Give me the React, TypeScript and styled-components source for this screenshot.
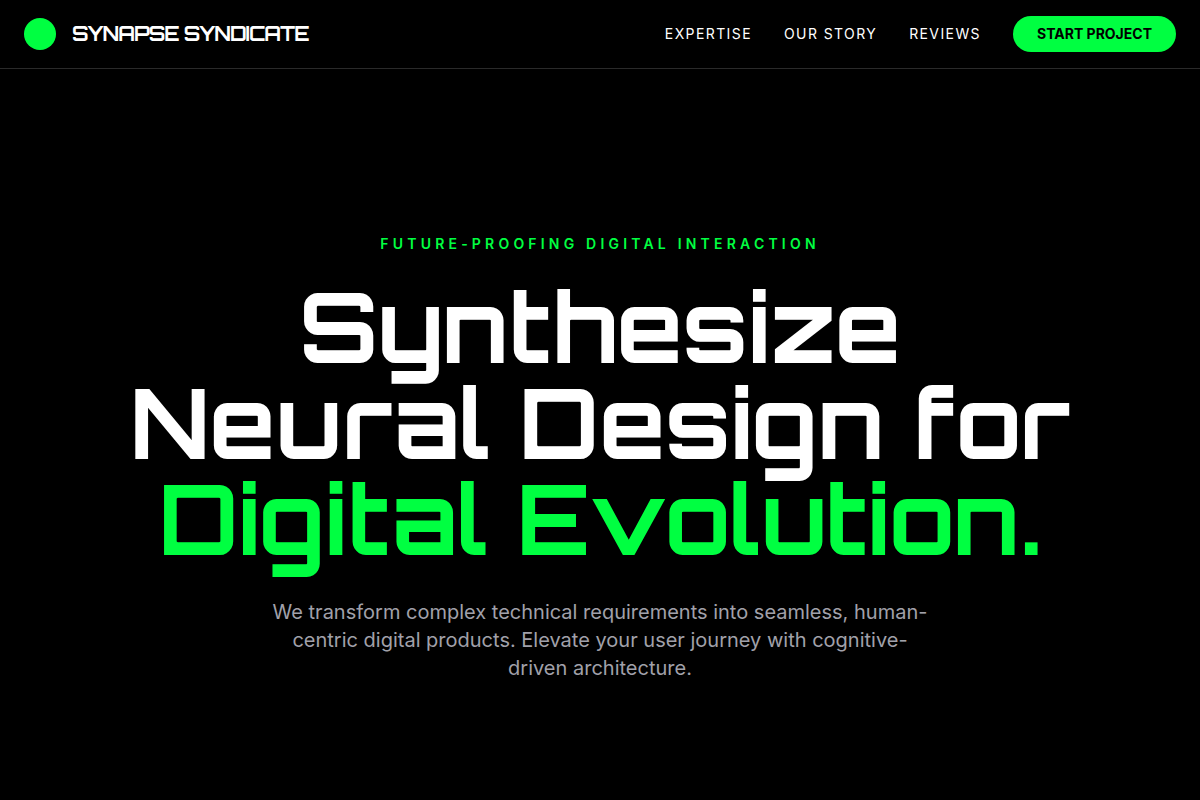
import React from "react";
import styled, { createGlobalStyle, ThemeProvider } from "styled-components";

const theme = {
  accent: "#00ff41",
  background: "#000000",
  text: "#ffffff",
  muted: "#a1a1aa",
  line: "#2a2a2a",
  display: '"Orbitron", "DejaVu Sans", sans-serif',
  body: '"Inter", sans-serif',
};

const GlobalStyle = createGlobalStyle`
  *, *::before, *::after {
    box-sizing: border-box;
  }
  body {
    margin: 0;
    background: ${theme.background};
    color: ${theme.text};
    font-family: ${theme.body};
  }
`;

const Page = styled.div`
  display: flex;
  flex-direction: column;
  min-height: 100vh;
`;

const Header = styled.header`
  display: flex;
  flex-wrap: wrap;
  align-items: center;
  justify-content: space-between;
  gap: 16px;
  padding: 16px 24px;
  border-bottom: 1px solid ${({ theme }) => theme.line};
`;

const Brand = styled.a`
  display: flex;
  align-items: center;
  gap: 16px;
  color: ${({ theme }) => theme.text};
  font-family: ${({ theme }) => theme.display};
  font-size: 20px;
  font-weight: 700;
  line-height: 28px;
  letter-spacing: -0.05em;
  text-decoration: none;
`;

const BrandMark = styled.span`
  width: 32px;
  height: 32px;
  border-radius: 50%;
  background: ${({ theme }) => theme.accent};
`;

const Nav = styled.nav`
  display: flex;
  flex-wrap: wrap;
  align-items: center;
  gap: 32px;
`;

const NavLink = styled.a`
  color: ${({ theme }) => theme.text};
  font-size: 14px;
  line-height: 20px;
  letter-spacing: 0.1em;
  text-decoration: none;
  text-transform: uppercase;

  &:hover {
    color: ${({ theme }) => theme.accent};
  }
`;

const StartButton = styled.button`
  padding: 8px 24px;
  border: 0;
  border-radius: 18px;
  background: ${({ theme }) => theme.accent};
  color: ${({ theme }) => theme.background};
  font-family: inherit;
  font-size: 14px;
  font-weight: 700;
  line-height: 20px;
  cursor: pointer;
`;

const Hero = styled.main`
  display: flex;
  flex-direction: column;
  align-items: center;
  padding: 165px 24px 96px;
  text-align: center;
`;

const Eyebrow = styled.p`
  margin: 0 0 24px;
  color: ${({ theme }) => theme.accent};
  font-size: 14px;
  font-weight: 600;
  line-height: 20px;
  letter-spacing: 0.3em;
  text-transform: uppercase;
`;

const Headline = styled.h1`
  margin: 0 0 32px;
  font-family: ${({ theme }) => theme.display};
  font-size: 96px;
  font-weight: 700;
  line-height: 96px;

  @media (max-width: 1023px) {
    font-size: 48px;
    line-height: 52px;
  }
`;

const HeadlineLine = styled.span<{ $accent?: boolean }>`
  display: block;
  color: ${({ $accent, theme }) => ($accent ? theme.accent : "inherit")};
`;

const Lead = styled.p`
  max-width: 672px;
  margin: 0;
  color: ${({ theme }) => theme.muted};
  font-size: 20px;
  line-height: 28px;
`;

const links = [
  { label: "Expertise", href: "#expertise" },
  { label: "Our Story", href: "#story" },
  { label: "Reviews", href: "#reviews" },
];

export default function App() {
  return (
    <ThemeProvider theme={theme}>
      <GlobalStyle />
      <Page>
        <Header>
          <Brand href="#top">
            <BrandMark aria-hidden="true" />
            SYNAPSE SYNDICATE
          </Brand>
          <Nav aria-label="Main">
            {links.map((link) => (
              <NavLink key={link.href} href={link.href}>
                {link.label}
              </NavLink>
            ))}
            <StartButton type="button">START PROJECT</StartButton>
          </Nav>
        </Header>
        <Hero id="top">
          <Eyebrow>Future-Proofing Digital Interaction</Eyebrow>
          <Headline>
            <HeadlineLine>Synthesize</HeadlineLine>
            <HeadlineLine>Neural Design for</HeadlineLine>
            <HeadlineLine $accent>Digital Evolution.</HeadlineLine>
          </Headline>
          <Lead>
            We transform complex technical requirements into seamless,
            human-centric digital products. Elevate your user journey with
            cognitive-driven architecture.
          </Lead>
        </Hero>
      </Page>
    </ThemeProvider>
  );
}
